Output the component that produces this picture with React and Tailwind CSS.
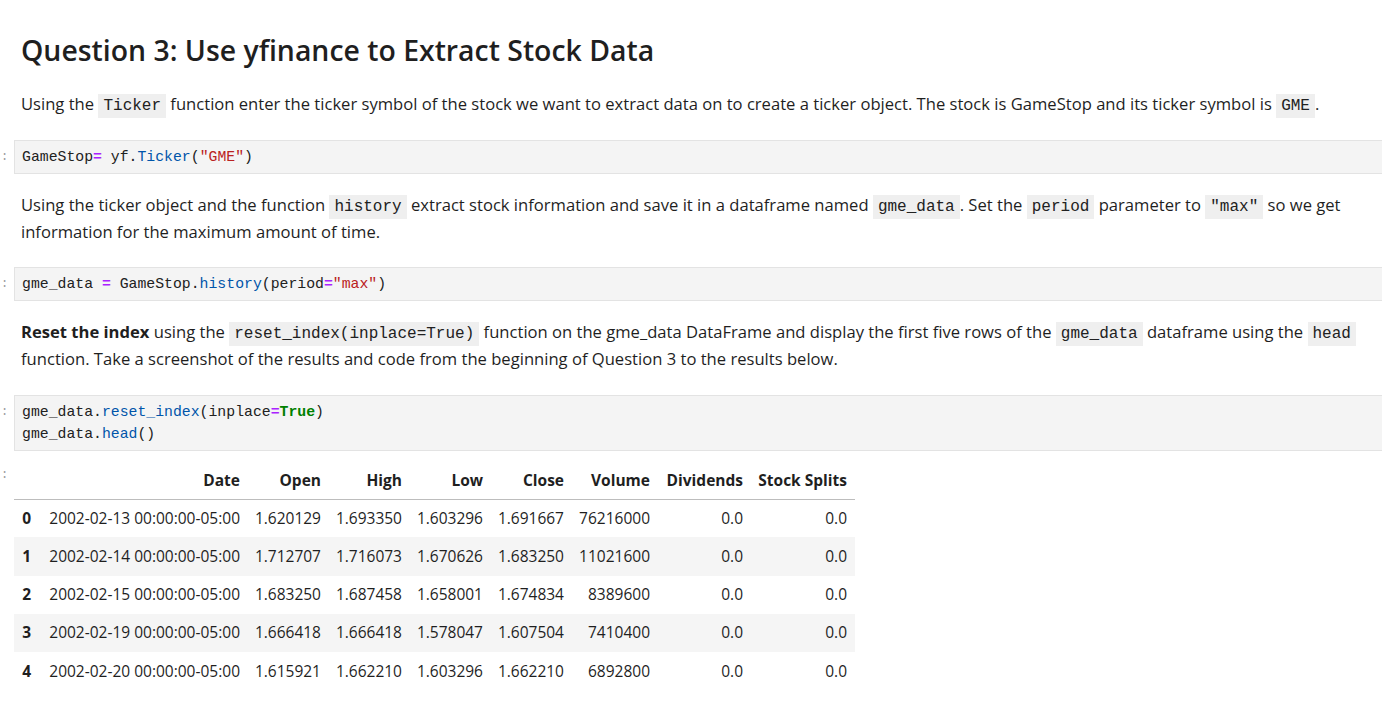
import React from "react"

const sans = "font-['Open_Sans','Segoe_UI',sans-serif]"
const mono = "font-['Liberation_Mono','DejaVu_Sans_Mono',monospace]"

const Code = ({ children }) => (
  <code className={`${mono} text-[16px] leading-none bg-[#efefef] px-[5px] py-[3px] text-[#212121]`}>{children}</code>
)

const Prompt = () => (
  <div className={`w-[14px] shrink-0 pl-[1px] text-[#9e9e9e] text-[12px] leading-[22px] ${mono}`}>:</div>
)

const CodeCell = ({ children, top }) => (
  <div className={`flex ${top}`}>
    <div className="w-[14px] shrink-0 pt-[6px]">
      <Prompt />
    </div>
    <div
      className={`w-[1380px] shrink-0 border border-[#e3e3e3] bg-[#f4f4f4] px-[7px] py-[5px] ${mono} text-[14.8px] leading-[22px] text-[#212121]`}
    >
      {children}
    </div>
  </div>
)

const Op = ({ children }) => <span className="text-[#aa22ff] font-bold">{children}</span>
const Fn = ({ children }) => <span className="text-[#0055aa]">{children}</span>
const Str = ({ children }) => <span className="text-[#ba2121]">{children}</span>

const rows = [
  ["0", "2002-02-13 00:00:00-05:00", "1.620129", "1.693350", "1.603296", "1.691667", "76216000", "0.0", "0.0"],
  ["1", "2002-02-14 00:00:00-05:00", "1.712707", "1.716073", "1.670626", "1.683250", "11021600", "0.0", "0.0"],
  ["2", "2002-02-15 00:00:00-05:00", "1.683250", "1.687458", "1.658001", "1.674834", "8389600", "0.0", "0.0"],
  ["3", "2002-02-19 00:00:00-05:00", "1.666418", "1.666418", "1.578047", "1.607504", "7410400", "0.0", "0.0"],
  ["4", "2002-02-20 00:00:00-05:00", "1.615921", "1.662210", "1.603296", "1.662210", "6892800", "0.0", "0.0"],
]

const cols = ["", "Date", "Open", "High", "Low", "Close", "Volume", "Dividends", "Stock Splits"]
const widths = ["w-[25px]", "w-[209px]", "w-[81px]", "w-[81px]", "w-[81px]", "w-[81px]", "w-[86px]", "w-[93px]", "w-[104px]"]

export default function App() {
  return (
    <div className={`w-[1382px] h-[707px] overflow-hidden bg-white text-[#1f1f1f] ${sans}`}>
      {/* markdown: heading + intro */}
      <div className="pl-[21px] pr-[16px]">
        <h2 className="pt-[33px] text-[28.4px] leading-[34px] font-semibold">Question 3: Use yfinance to Extract Stock Data</h2>
        <p className="mt-[23px] text-[16.6px] leading-[27px]">
          Using the <Code>Ticker</Code> function enter the ticker symbol of the stock we want to extract data on to create a
          ticker object. The stock is GameStop and its ticker symbol is <Code>GME</Code>.
        </p>
      </div>

      <CodeCell top="mt-[23px]">
        GameStop<Op>=</Op> yf.<Fn>Ticker</Fn>(<Str>"GME"</Str>)
      </CodeCell>

      <div className="pl-[21px] pr-[16px]">
        <p className="mt-[17px] text-[16.6px] leading-[27px]">
          Using the ticker object and the function <Code>history</Code> extract stock information and save it in a dataframe
          named <Code>gme_data</Code>. Set the <Code>period</Code> parameter to <Code>"max"</Code> so we get information for
          the maximum amount of time.
        </p>
      </div>

      <CodeCell top="mt-[22px]">
        gme_data <Op>=</Op> GameStop.<Fn>history</Fn>(period<Op>=</Op>
        <Str>"max"</Str>)
      </CodeCell>

      <div className="pl-[21px] pr-[16px]">
        <p className="mt-[17px] text-[16.6px] leading-[27px]">
          <b>Reset the index</b> using the <Code>reset_index(inplace=True)</Code> function on the gme_data DataFrame and display
          the first five rows of the <Code>gme_data</Code> dataframe using the <Code>head</Code> function. Take a screenshot of
          the results and code from the beginning of Question 3 to the results below.
        </p>
      </div>

      <CodeCell top="mt-[23px]">
        <div>
          gme_data.<Fn>reset_index</Fn>(inplace<Op>=</Op>
          <span className="text-[#008000] font-bold">True</span>)
        </div>
        <div>
          gme_data.<Fn>head</Fn>()
        </div>
      </CodeCell>

      {/* output */}
      <div className="flex mt-[12px]">
        <div className="w-[14px] shrink-0 pt-[1px]">
          <Prompt />
        </div>
        <table className="w-[841px] table-fixed border-collapse text-[15.5px] text-[#1f1f1f]">
          <thead>
            <tr className="border-b border-[#bdbdbd]">
              {cols.map((c, i) => (
                <th key={i} className={`${widths[i]} h-[36px] pl-[4px] pr-[8px] text-right font-bold align-middle whitespace-nowrap`}>
                  {c}
                </th>
              ))}
            </tr>
          </thead>
          <tbody>
            {rows.map((r, ri) => (
              <tr key={ri} className={ri % 2 === 1 ? "bg-[#f5f5f5]" : "bg-white"}>
                {r.map((v, ci) => (
                  <td
                    key={ci}
                    className={`h-[38.25px] pl-[4px] pr-[8px] text-right align-middle whitespace-nowrap ${ci === 0 ? "font-bold" : ""}`}
                  >
                    {v}
                  </td>
                ))}
              </tr>
            ))}
          </tbody>
        </table>
      </div>
    </div>
  )
}
